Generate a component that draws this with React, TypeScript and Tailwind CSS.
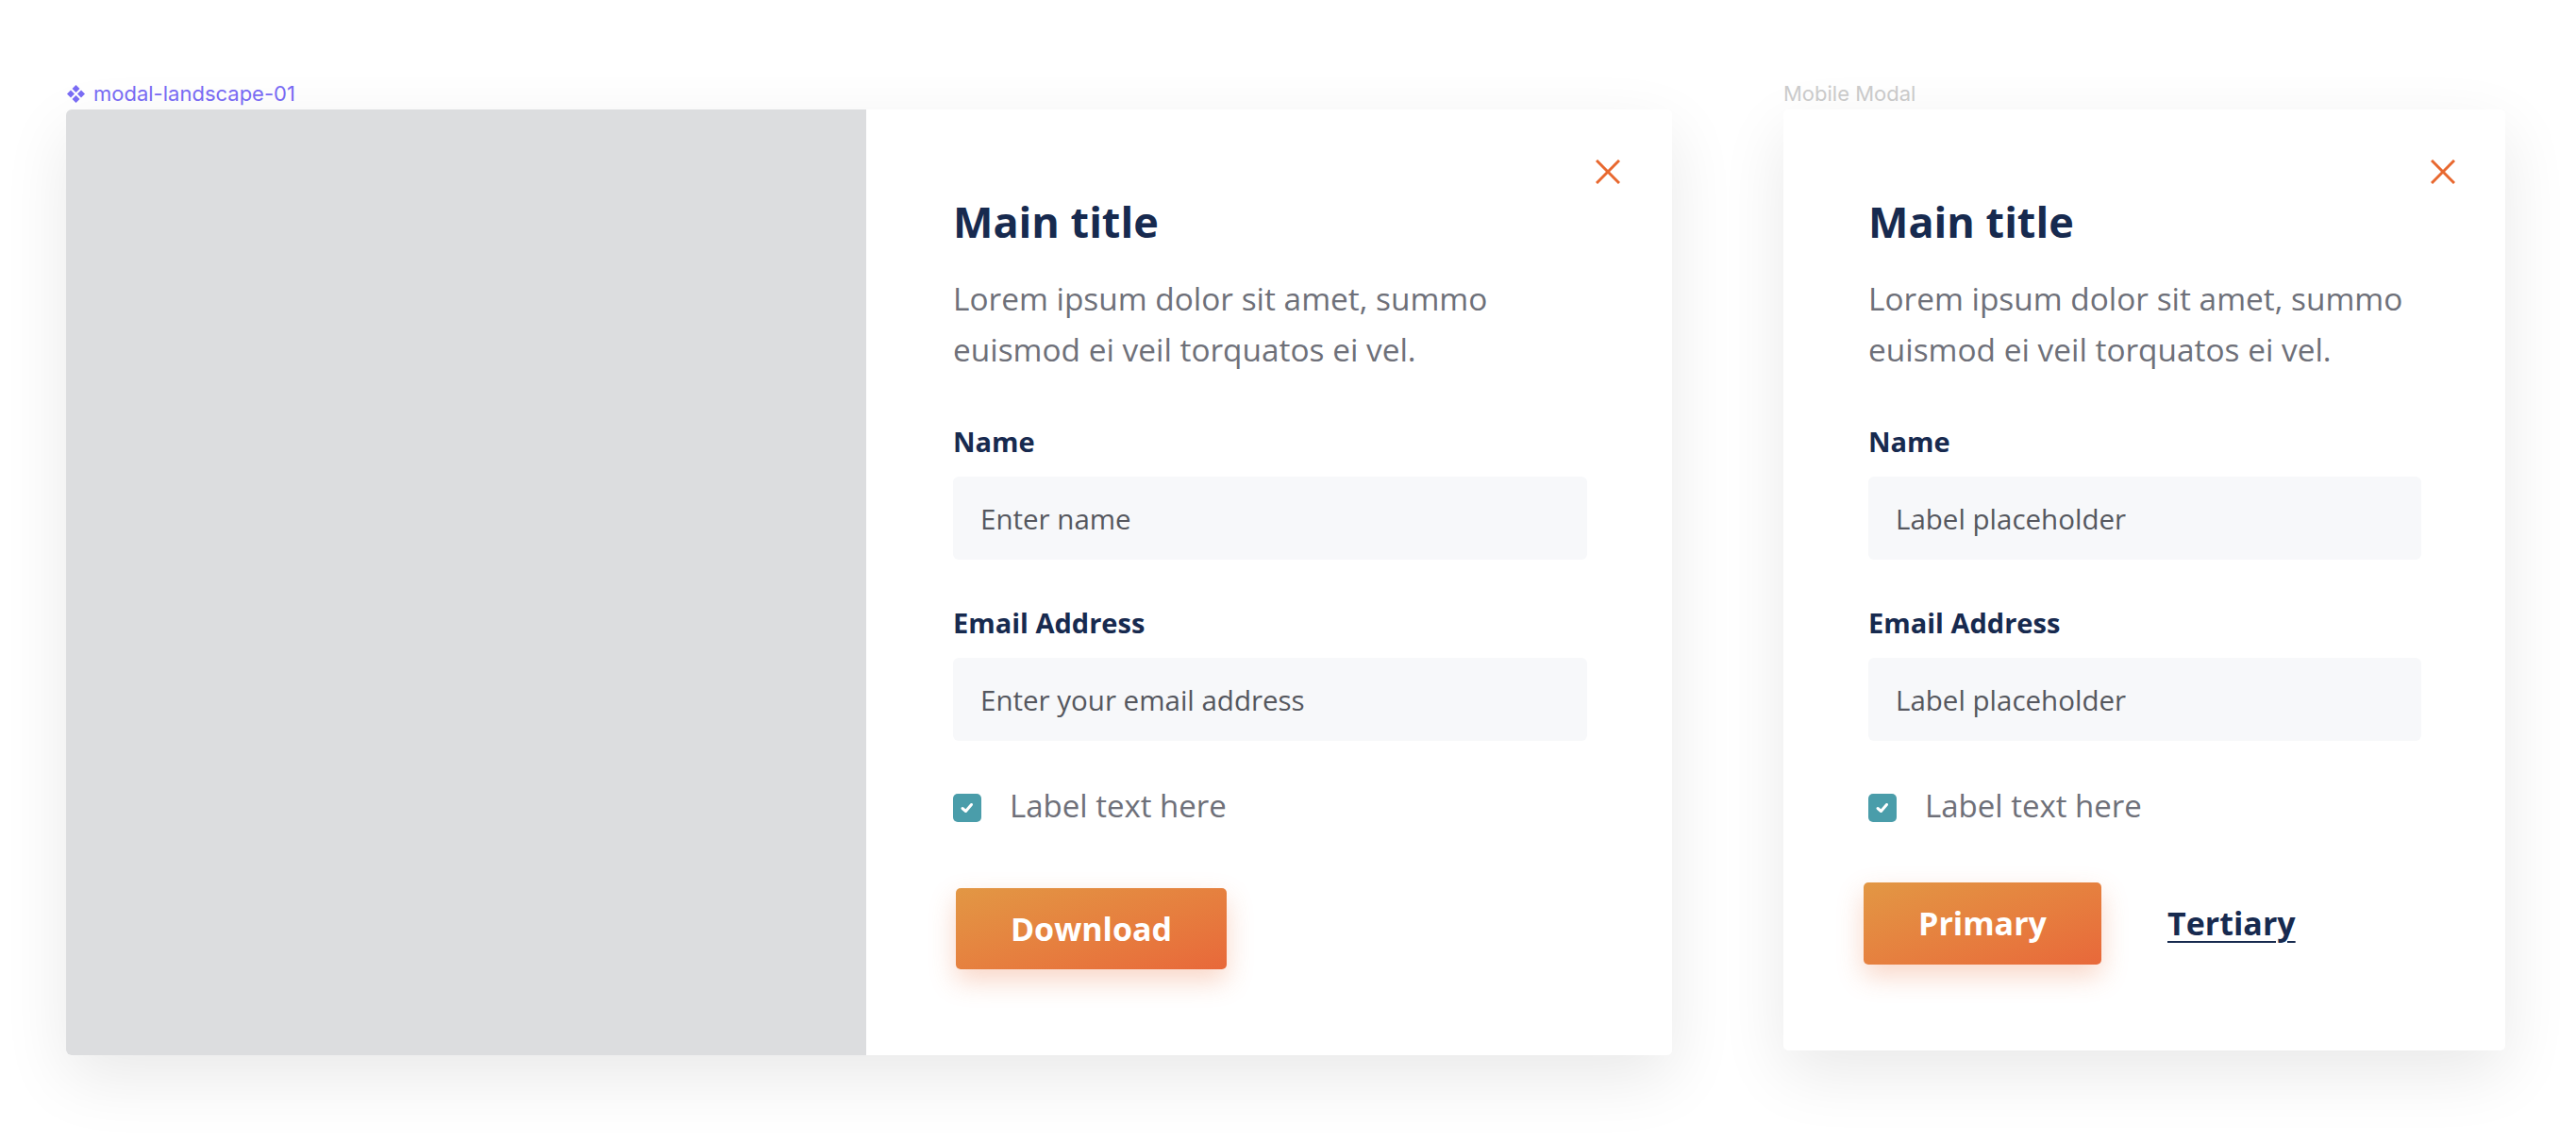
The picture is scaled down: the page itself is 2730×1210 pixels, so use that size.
import React from "react";

function ComponentIcon() {
  return (
    <svg width="21" height="21" viewBox="0 0 21 21" className="shrink-0">
      <path d="M10.5 1 L14.5 5 L10.5 9 L6.5 5 Z" fill="#7A6CF5" />
      <path d="M10.5 12 L14.5 16 L10.5 20 L6.5 16 Z" fill="#7A6CF5" />
      <path d="M5 6.5 L9 10.5 L5 14.5 L1 10.5 Z" fill="#7A6CF5" />
      <path d="M16 6.5 L20 10.5 L16 14.5 L12 10.5 Z" fill="#7A6CF5" />
    </svg>
  );
}

function CloseButton({ className }: { className: string }) {
  return (
    <button aria-label="Close" className={`absolute ${className}`}>
      <svg width="26" height="26" viewBox="0 0 26 26" fill="none" stroke="#E8682F" strokeWidth="3">
        <line x1="1" y1="1" x2="25" y2="25" />
        <line x1="25" y1="1" x2="1" y2="25" />
      </svg>
    </button>
  );
}

function Field({ label, placeholder, gapTop }: { label: string; placeholder: string; gapTop: string }) {
  return (
    <div className={`flex flex-col ${gapTop}`}>
      <label className="text-[29px] leading-[36px] font-bold text-[#172A4F]">{label}</label>
      <input
        readOnly
        placeholder={placeholder}
        className="mt-[19px] h-[88px] w-full rounded-[6px] bg-[#F7F8FA] px-[29px] text-[29.5px] text-[#55575E] placeholder:text-[#55575E] outline-none"
      />
    </div>
  );
}

function CheckRow() {
  return (
    <div className="mt-[53px] flex items-center gap-[30px]">
      <span className="flex h-[30px] w-[30px] items-center justify-center rounded-[5px] bg-[#4A9DAA]">
        <svg width="16" height="16" viewBox="0 0 16 16" fill="none" stroke="white" strokeWidth="3" strokeLinecap="round" strokeLinejoin="round">
          <polyline points="3,8.5 6.5,11.5 12.5,4.5" />
        </svg>
      </span>
      <span className="text-[33px] leading-[40px] text-[#6E7079] -mt-[4px]">Label text here</span>
    </div>
  );
}

function ModalBody({ namePh, emailPh }: { namePh: string; emailPh: string }) {
  return (
    <>
      <h1 className="text-[45px] leading-[60px] font-bold text-[#172A4F]">Main title</h1>
      <p className="mt-[24px] text-[33.4px] leading-[54px] text-[#6E7079]">
        Lorem ipsum dolor sit amet, summo
        <br />
        euismod ei veil torquatos ei vel.
      </p>
      <Field label="Name" placeholder={namePh} gapTop="mt-[53px]" />
      <Field label="Email Address" placeholder={emailPh} gapTop="mt-[49px]" />
      <CheckRow />
    </>
  );
}

const btn =
  "flex items-center justify-center rounded-[5px] bg-gradient-to-br from-[#E29744] to-[#E8683A] text-[34px] font-bold text-white shadow-[0_12px_28px_rgba(232,106,53,0.28)]";

export default function App() {
  return (
    <div className="w-[2730px] h-[1210px] bg-white flex items-start gap-[118px] pl-[70px] pt-[87px] font-['Open_Sans',sans-serif] overflow-hidden">
      <div className="flex flex-col">
        <div className="flex items-center gap-[8px] h-[24px] leading-[24px] mb-[5px] font-['Inter',sans-serif] text-[22px] text-[#7A6CF5]">
          <ComponentIcon />
          <span>modal-landscape-01</span>
        </div>
        <div className="flex w-[1702px] h-[1002px] rounded-[5px] bg-white shadow-[0_24px_70px_rgba(0,0,0,0.09)]">
          <div className="w-[848px] rounded-l-[6px] bg-[#DCDDDF]" />
          <div className="relative flex-1 flex flex-col pl-[92px] pr-[90px] pt-[89px]">
            <CloseButton className="top-[53px] right-[55px]" />
            <ModalBody namePh="Enter name" emailPh="Enter your email address" />
            <button className={`${btn} mt-[67px] ml-[3px] w-[287px] h-[86px]`}>Download</button>
          </div>
        </div>
      </div>

      <div className="flex flex-col">
        <div className="h-[24px] leading-[24px] mb-[5px] font-['Inter',sans-serif] text-[22px] text-[#CCCCCC]">Mobile Modal</div>
        <div className="relative flex flex-col w-[765px] h-[997px] rounded-[5px] bg-white pl-[90px] pr-[89px] pt-[89px] shadow-[0_24px_70px_rgba(0,0,0,0.09)]">
          <CloseButton className="top-[53px] right-[53px]" />
          <ModalBody namePh="Label placeholder" emailPh="Label placeholder" />
          <div className="mt-[61px] -ml-[5px] flex items-center gap-[70px]">
            <button className={`${btn} w-[252px] h-[87px]`}>Primary</button>
            <a className="text-[34px] font-bold text-[#172A4F] underline decoration-[2px] underline-offset-[6px]">
              Tertiary
            </a>
          </div>
        </div>
      </div>
    </div>
  );
}
